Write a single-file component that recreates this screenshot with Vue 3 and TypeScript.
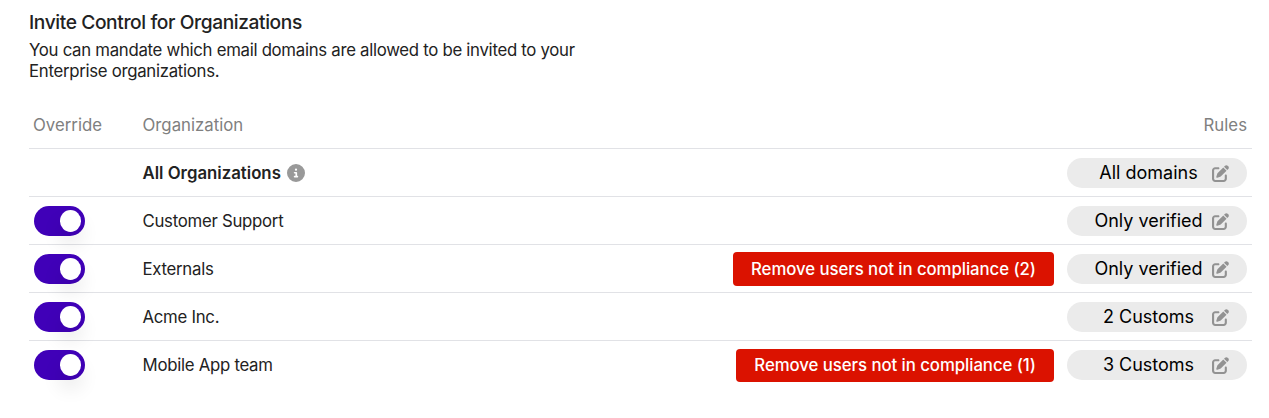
<script setup lang="ts">
import { ref } from 'vue'

interface Organization {
  name: string
  rule: string
  all?: boolean
  enabled?: boolean
  violations?: number
}

const organizations = ref<Organization[]>([
  { name: 'All Organizations', rule: 'All domains', all: true },
  { name: 'Customer Support', rule: 'Only verified', enabled: true },
  { name: 'Externals', rule: 'Only verified', enabled: true, violations: 2 },
  { name: 'Acme Inc.', rule: '2 Customs', enabled: true },
  { name: 'Mobile App team', rule: '3 Customs', enabled: true, violations: 1 },
])

function toggle(org: Organization) {
  org.enabled = !org.enabled
}
</script>

<template>
  <main class="page">
    <h1 class="title">Invite Control for Organizations</h1>
    <p class="intro">You can mandate which email domains are allowed to be invited to your Enterprise organizations.</p>

    <section class="table">
      <div class="row head">
        <span class="override">Override</span>
        <span>Organization</span>
        <span class="rules">Rules</span>
      </div>
      <div v-for="org in organizations" :key="org.name" class="row">
        <div class="override">
          <button
            v-if="!org.all"
            class="switch"
            :class="{ on: org.enabled }"
            role="switch"
            :aria-checked="org.enabled"
            @click="toggle(org)"
          >
            <span class="knob"></span>
          </button>
        </div>
        <div class="name" :class="{ strong: org.all }">
          <span>{{ org.name }}</span>
          <svg v-if="org.all" class="info" viewBox="0 0 512 512">
            <path d="M256 512A256 256 0 1 0 256 0a256 256 0 1 0 0 512zM216 336h24V272H216c-13.3 0-24-10.7-24-24s10.7-24 24-24h48c13.3 0 24 10.7 24 24v88h8c13.3 0 24 10.7 24 24s-10.7 24-24 24H216c-13.3 0-24-10.7-24-24s10.7-24 24-24zm40-208a32 32 0 1 1 0 64 32 32 0 1 1 0-64z" />
          </svg>
        </div>
        <div class="actions">
          <button v-if="org.violations" class="remove">
            Remove users not in compliance ({{ org.violations }})
          </button>
          <button class="pill">
            <span class="pill-label">{{ org.rule }}</span>
            <svg class="edit" viewBox="0 0 512 512">
              <path d="M471.6 21.7c-21.9-21.9-57.3-21.9-79.2 0L362.3 51.7l97.9 97.9 30.1-30.1c21.9-21.9 21.9-57.3 0-79.2L471.6 21.7zm-299.2 220c-6.1 6.1-10.8 13.6-13.5 21.9l-29.6 88.8c-2.9 8.6-.6 18.1 5.8 24.6s15.9 8.7 24.6 5.8l88.8-29.6c8.2-2.7 15.7-7.4 21.9-13.5L437.7 172.3 339.7 74.3 172.4 241.7zM96 64C43 64 0 107 0 160V416c0 53 43 96 96 96H352c53 0 96-43 96-96V320c0-17.7-14.3-32-32-32s-32 14.3-32 32v96c0 17.7-14.3 32-32 32H96c-17.7 0-32-14.3-32-32V160c0-17.7 14.3-32 32-32h96c17.7 0 32-14.3 32-32s-14.3-32-32-32H96z" />
            </svg>
          </button>
        </div>
      </div>
    </section>
  </main>
</template>

<style>
body {
  background: #fff;
}
</style>

<style scoped>
.page {
  box-sizing: border-box;
  height: 418px;
  padding: 10px 17px 0 29px;
  overflow: hidden;
  font-family: Inter, "Liberation Sans", sans-serif;
  font-size: 16.8px;
  color: #222;
}
.title {
  margin: 0;
  font-size: 19.2px;
  font-weight: 500;
  line-height: 24px;
  letter-spacing: -0.4px;
}
.intro {
  width: 560px;
  margin: 6px 0 0;
  line-height: 21px;
  letter-spacing: -0.295px;
}
.table {
  margin-top: 18px;
}
.row {
  box-sizing: border-box;
  display: grid;
  grid-template-columns: 113.5px 1fr auto;
  align-items: center;
  height: 48px;
  padding-right: 5px;
  border-top: 1px solid #e1e2e6;
}
.head {
  border-top-color: transparent;
  color: #808080;
}
.override {
  padding-left: 5px;
}
.head .override {
  padding-left: 4px;
}
.name {
  display: flex;
  align-items: center;
  gap: 6px;
  letter-spacing: -0.28px;
}
.strong {
  font-weight: 600;
  letter-spacing: 0;
}
.info {
  width: 18px;
  height: 18px;
  fill: #999;
}
.actions {
  display: flex;
  align-items: center;
  gap: 13px;
}
button {
  margin: 0;
  border: 0;
  font-family: inherit;
  cursor: pointer;
}
.switch {
  box-sizing: border-box;
  display: flex;
  align-items: center;
  width: 51px;
  height: 30px;
  padding: 0 4px;
  border-radius: 15px;
  background: #bbb;
}
.switch.on {
  justify-content: flex-end;
  background: #4000b8;
}
.knob {
  width: 21.5px;
  height: 22px;
  border-radius: 50%;
  background: #fff;
  box-shadow: 0 12px 20px rgba(0, 0, 0, 0.11);
}
.remove {
  height: 34px;
  padding: 0 18px;
  border-radius: 4px;
  background: #db1200;
  color: #fff;
  font-size: 16.8px;
  font-weight: 500;
  letter-spacing: -0.06px;
}
.row:last-child .remove {
  height: 33px;
  margin-top: 1px;
  padding-bottom: 1px;
}
.pill {
  display: flex;
  align-items: center;
  width: 180px;
  height: 30px;
  padding: 0 18px 0 27px;
  border-radius: 15px;
  background: #ebebeb;
  color: #000;
  font-size: 18px;
}
.pill-label {
  flex: 1;
  text-align: center;
  white-space: nowrap;
}
.edit {
  flex: none;
  width: 17px;
  height: 17px;
  margin: 1px 0 0 9px;
  fill: #929292;
}
</style>
